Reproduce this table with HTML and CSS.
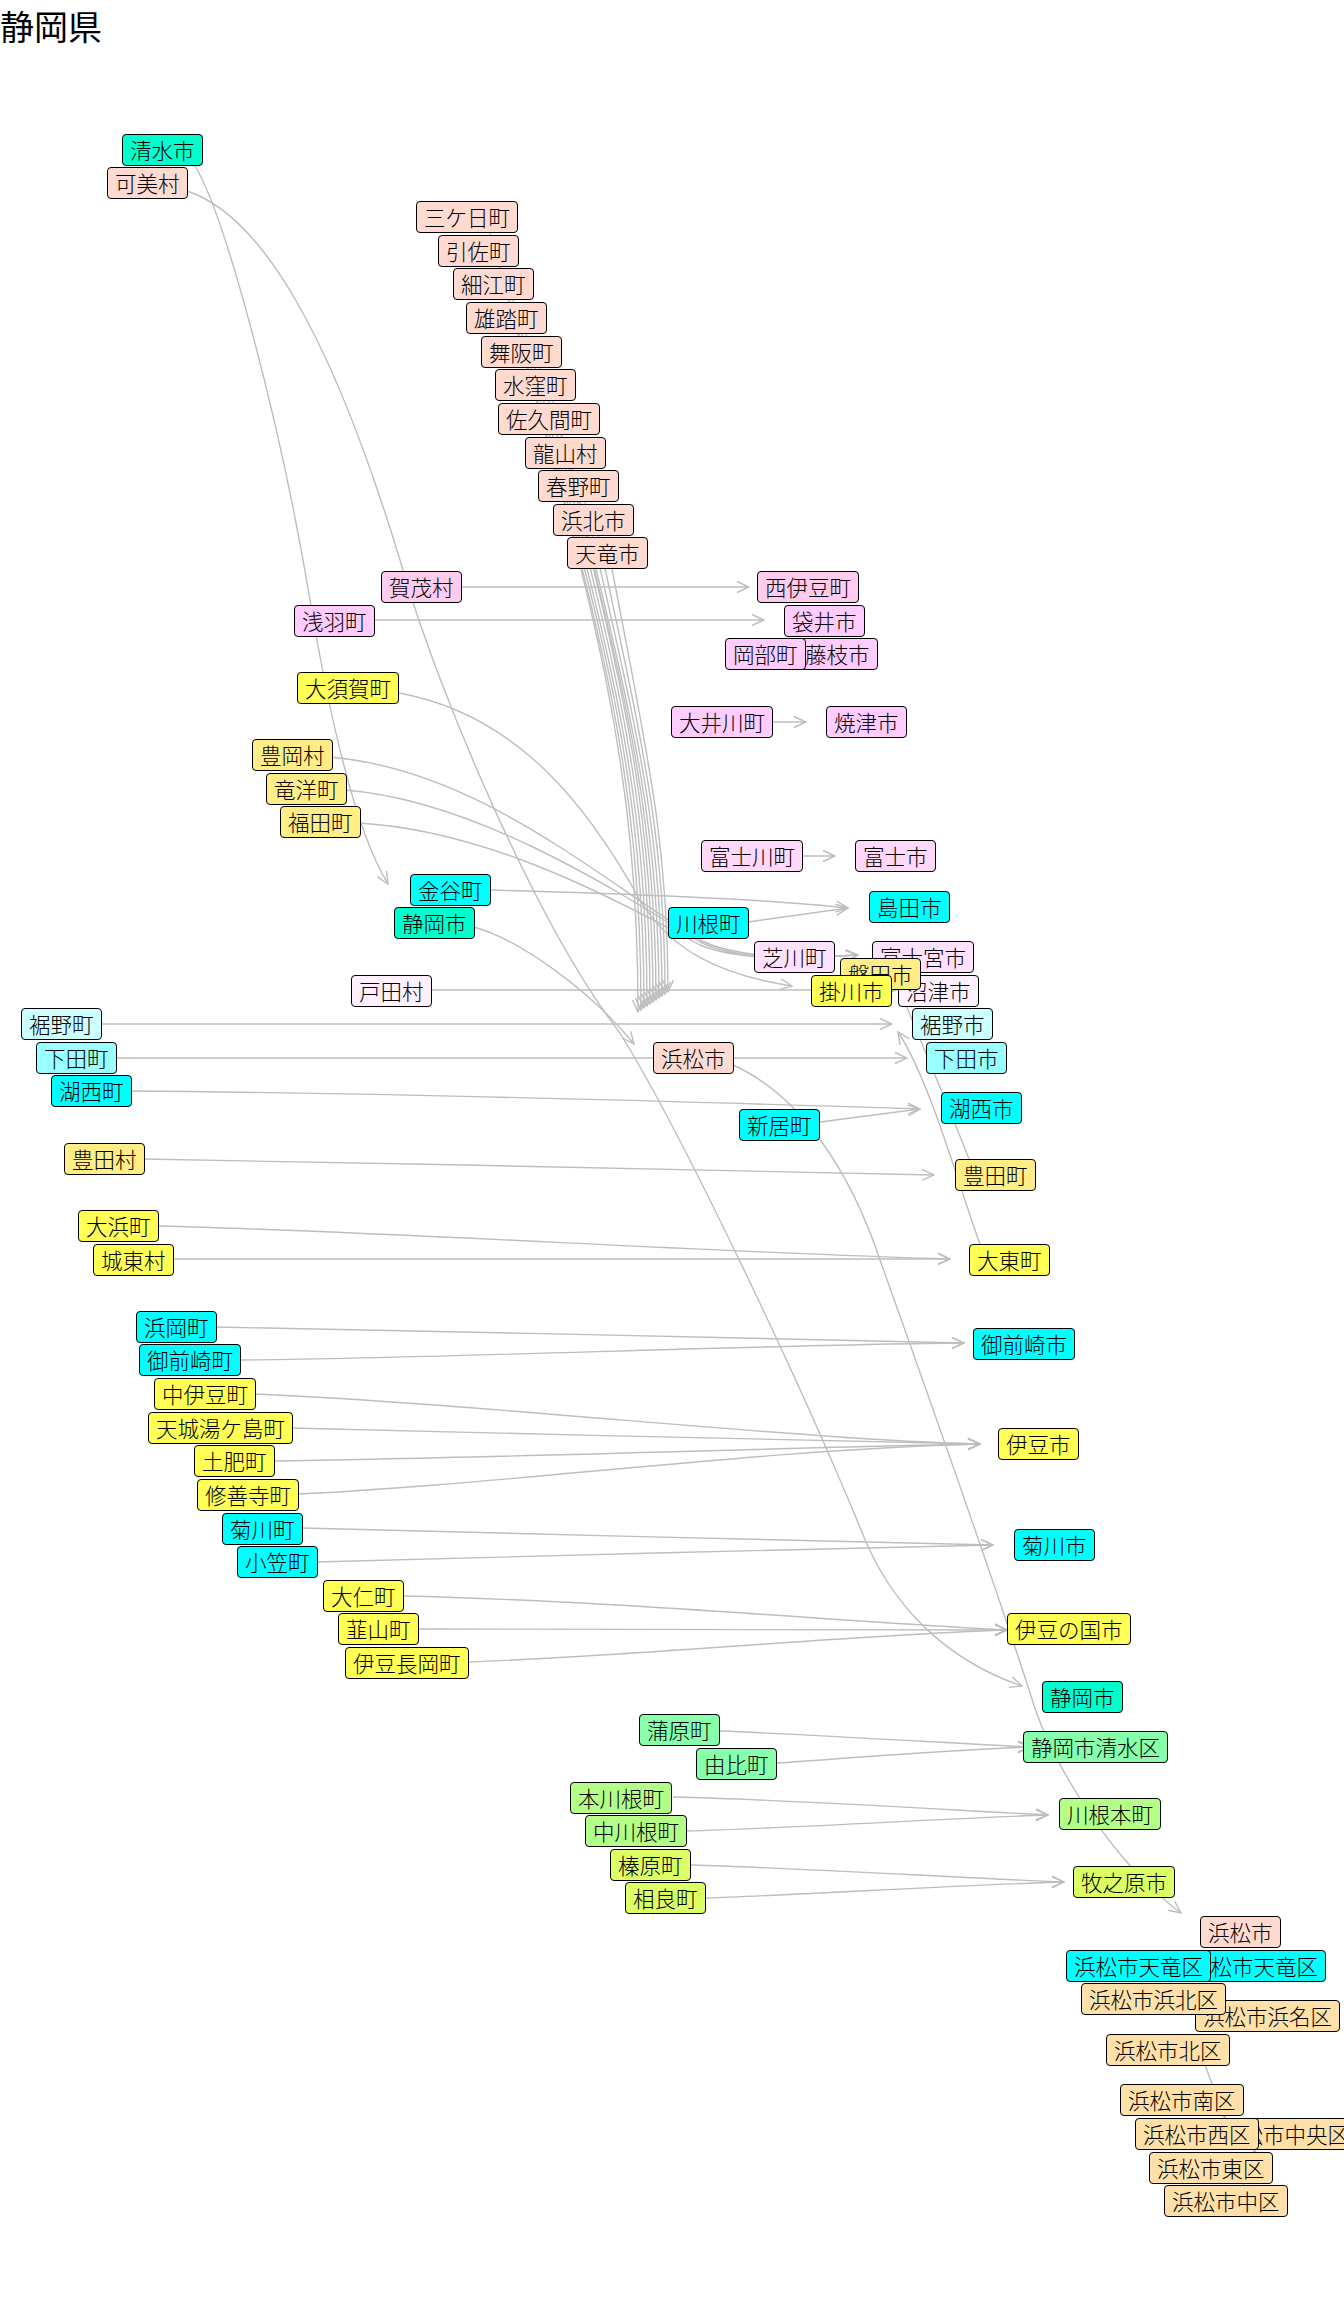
FILE: index.html
```html
<!DOCTYPE html>
<html lang="ja">
<head>
<meta charset="utf-8">
<title>静岡県</title>
<link rel="stylesheet" href="styles.css">
</head>
<body>
<h1 class="title">静岡県</h1>
<div class="graph">
<svg class="edges" viewBox="0 56 1344 2248" xmlns="http://www.w3.org/2000/svg">
<defs>
<marker id="arr" viewBox="0 0 14 14" refX="13" refY="7" markerWidth="14" markerHeight="14" markerUnits="userSpaceOnUse" orient="auto">
<path class="head" d="M1,1.5 L13,7 L1,12.5"/>
</marker>
</defs>
<!-- 浜松市 bundle -->
<path class="a" d="M490,233 C586.2,583.6 638,739.4 638,1012"/>
<path class="a" d="M500,266 C591.7,600.8 641,749.6 641,1010"/>
<path class="a" d="M513,300 C598.2,618.6 644,760.2 644,1008"/>
<path class="a" d="M526,334 C604.7,636.4 647,770.8 647,1006"/>
<path class="a" d="M540,367 C611.5,653.7 650,781.1 650,1004"/>
<path class="a" d="M553,401 C618,671.5 653,791.7 653,1002"/>
<path class="a" d="M562,435 C623.1,689.3 656,802.3 656,1000"/>
<path class="a" d="M572,468 C628.6,706.5 659,812.5 659,998"/>
<path class="a" d="M585,502 C635,724.3 662,823.1 662,996"/>
<path class="a" d="M598,535 C641.6,741.6 665,833.4 665,994"/>
<path class="a" d="M612,569 C648.4,759.4 668,844 668,992"/>
<!-- long curves -->
<path class="a" d="M195,166 C225,215 280,420 310,600 C330,720 355,830 388,884"/>
<path class="a" d="M187,191 C260,215 330,330 400,560 C440,700 540,930 620,1033 C680,1130 800,1380 866,1542 C900,1620 960,1665 1022,1686"/>
<path class="a" d="M474,927 C520,940 590,990 634,1044"/>
<path class="a" d="M733,1065 C800,1095 850,1170 880,1260 C930,1400 1000,1600 1031,1696 C1050,1760 1110,1860 1181,1913"/>
<!-- straight -->
<path class="a" d="M460,587 L749,587"/>
<path class="a" d="M374,620 L764,620"/>
<path class="a" d="M773,722 L806,722"/>
<path class="a" d="M802,856 L835,856"/>
<!-- to 掛川市 / 磐田市 -->
<path class="a" d="M399,693 C520,715 590,810 640,900 C670,950 720,975 792,986"/>
<path class="a" d="M330,757 C480,770 600,880 700,940 C740,960 810,958 858,955"/>
<path class="a" d="M345,790 C470,800 600,880 700,942 C740,962 810,958 858,955"/>
<path class="a" d="M359,823 C480,830 600,890 700,945 C740,962 810,958 858,955"/>
<path class="a" d="M489,890 C600,893 760,898 848,908"/>
<path class="a" d="M748,922 L848,908"/>
<path class="a" d="M431,990 L896,990"/>
<path class="a" d="M101,1024 L892,1024"/>
<path class="a" d="M115,1058 L907,1058"/>
<path class="a" d="M129,1091 C400,1093 700,1102 920,1109"/>
<path class="a" d="M820,1122 L920,1109"/>
<path class="a" d="M144,1159 C400,1162 700,1172 934,1175"/>
<path class="a" d="M159,1226 C400,1232 700,1252 950,1259"/>
<path class="a" d="M172,1259 L950,1259"/>
<path class="a" d="M980,1244 C960,1190 930,1080 898,1032"/>
<path class="a" d="M969,1159 C950,1110 920,1040 900,990"/>
<path class="a" d="M215,1327 C450,1330 750,1340 964,1343"/>
<path class="a" d="M241,1360 C450,1358 750,1345 964,1343"/>
<path class="a" d="M255,1394 C500,1405 800,1440 980,1444"/>
<path class="a" d="M290,1428 C500,1432 800,1442 980,1444"/>
<path class="a" d="M273,1461 C500,1458 800,1447 980,1444"/>
<path class="a" d="M298,1494 C500,1485 750,1450 980,1444"/>
<path class="a" d="M302,1528 C500,1532 800,1542 993,1545"/>
<path class="a" d="M316,1562 C500,1558 800,1548 993,1545"/>
<path class="a" d="M402,1596 C600,1600 850,1622 1007,1630"/>
<path class="a" d="M417,1629 L1007,1630"/>
<path class="a" d="M468,1662 C650,1655 850,1635 1007,1630"/>
<path class="a" d="M720,1731 C800,1734 950,1743 1030,1747"/>
<path class="a" d="M777,1763 C850,1758 950,1750 1030,1747"/>
<path class="a" d="M673,1797 C800,1800 950,1810 1048,1815"/>
<path class="a" d="M686,1831 C800,1828 950,1818 1048,1815"/>
<path class="a" d="M691,1865 C800,1868 960,1878 1064,1882"/>
<path class="a" d="M704,1898 C800,1895 960,1885 1064,1882"/>
<path class="a" d="M1205,2065 L1225,2118"/>
<path class="a" d="M1243,2186 L1255,2150"/>
</svg>

<div class="node c-shz" style="left:122px;top:78px">清水市</div>
<div class="node c-hama" style="left:107px;top:111px">可美村</div>
<div class="node c-hama" style="left:416px;top:145px">三ケ日町</div>
<div class="node c-hama" style="left:438px;top:179px">引佐町</div>
<div class="node c-hama" style="left:453px;top:212px">細江町</div>
<div class="node c-hama" style="left:466px;top:246px">雄踏町</div>
<div class="node c-hama" style="left:481px;top:280px">舞阪町</div>
<div class="node c-hama" style="left:495px;top:313px">水窪町</div>
<div class="node c-hama" style="left:498px;top:347px">佐久間町</div>
<div class="node c-hama" style="left:525px;top:381px">龍山村</div>
<div class="node c-hama" style="left:538px;top:414px">春野町</div>
<div class="node c-hama" style="left:553px;top:448px">浜北市</div>
<div class="node c-hama" style="left:567px;top:481px">天竜市</div>
<div class="node c-pink1" style="left:381px;top:515px">賀茂村</div>
<div class="node c-pink2" style="left:294px;top:549px">浅羽町</div>
<div class="node c-yel" style="left:297px;top:616px">大須賀町</div>
<div class="node c-gold" style="left:252px;top:683px">豊岡村</div>
<div class="node c-gold" style="left:266px;top:717px">竜洋町</div>
<div class="node c-gold" style="left:280px;top:750px">福田町</div>
<div class="node c-cyan" style="left:410px;top:818px">金谷町</div>
<div class="node c-shz" style="left:394px;top:851px">静岡市</div>
<div class="node c-pink5" style="left:351px;top:919px">戸田村</div>
<div class="node c-cyan1" style="left:21px;top:952px">裾野町</div>
<div class="node c-cyan2" style="left:36px;top:986px">下田町</div>
<div class="node c-cyan" style="left:51px;top:1019px">湖西町</div>

<div class="node c-pink1" style="left:757px;top:515px">西伊豆町</div>
<div class="node c-pink2" style="left:784px;top:549px">袋井市</div>
<div class="node c-pink2" style="left:797px;top:582px">藤枝市</div>
<div class="node c-pink2" style="left:725px;top:582px">岡部町</div>
<div class="node c-pink2" style="left:671px;top:650px">大井川町</div>
<div class="node c-pink2" style="left:826px;top:650px">焼津市</div>
<div class="node c-pink3" style="left:701px;top:784px">富士川町</div>
<div class="node c-pink3" style="left:855px;top:784px">富士市</div>
<div class="node c-cyan" style="left:869px;top:835px">島田市</div>
<div class="node c-cyan" style="left:668px;top:851px">川根町</div>
<div class="node c-pink4" style="left:754px;top:885px">芝川町</div>
<div class="node c-pink4" style="left:872px;top:885px">富士宮市</div>
<div class="node c-pink5" style="left:898px;top:919px">沼津市</div>
<div class="node c-gold" style="left:840px;top:902px">磐田市</div>
<div class="node c-yel" style="left:811px;top:919px">掛川市</div>
<div class="node c-cyan1" style="left:912px;top:952px">裾野市</div>
<div class="node c-cyan2" style="left:926px;top:986px">下田市</div>
<div class="node c-hama" style="left:653px;top:986px">浜松市</div>
<div class="node c-cyan" style="left:941px;top:1036px">湖西市</div>
<div class="node c-cyan" style="left:739px;top:1053px">新居町</div>

<div class="node c-gold" style="left:64px;top:1087px">豊田村</div>
<div class="node c-gold" style="left:955px;top:1103px">豊田町</div>
<div class="node c-yel" style="left:78px;top:1154px">大浜町</div>
<div class="node c-yel" style="left:93px;top:1188px">城東村</div>
<div class="node c-yel" style="left:969px;top:1188px">大東町</div>
<div class="node c-cyan" style="left:136px;top:1255px">浜岡町</div>
<div class="node c-cyan" style="left:139px;top:1288px">御前崎町</div>
<div class="node c-cyan" style="left:973px;top:1272px">御前崎市</div>
<div class="node c-yel" style="left:154px;top:1322px">中伊豆町</div>
<div class="node c-yel" style="left:148px;top:1356px">天城湯ケ島町</div>
<div class="node c-yel" style="left:194px;top:1389px">土肥町</div>
<div class="node c-yel" style="left:197px;top:1423px">修善寺町</div>
<div class="node c-yel" style="left:998px;top:1372px">伊豆市</div>
<div class="node c-cyan" style="left:222px;top:1457px">菊川町</div>
<div class="node c-cyan" style="left:237px;top:1490px">小笠町</div>
<div class="node c-cyan" style="left:1014px;top:1473px">菊川市</div>
<div class="node c-yel" style="left:323px;top:1524px">大仁町</div>
<div class="node c-yel" style="left:338px;top:1557px">韮山町</div>
<div class="node c-yel" style="left:345px;top:1591px">伊豆長岡町</div>
<div class="node c-yel" style="left:1007px;top:1557px">伊豆の国市</div>

<div class="node c-shz" style="left:1042px;top:1625px">静岡市</div>
<div class="node c-grn1" style="left:639px;top:1658px">蒲原町</div>
<div class="node c-grn1" style="left:696px;top:1692px">由比町</div>
<div class="node c-grn1" style="left:1023px;top:1675px">静岡市清水区</div>
<div class="node c-grn2" style="left:570px;top:1726px">本川根町</div>
<div class="node c-grn2" style="left:585px;top:1759px">中川根町</div>
<div class="node c-grn2" style="left:1059px;top:1742px">川根本町</div>
<div class="node c-grn3" style="left:610px;top:1793px">榛原町</div>
<div class="node c-grn3" style="left:625px;top:1826px">相良町</div>
<div class="node c-grn3" style="left:1073px;top:1810px">牧之原市</div>

<div class="node c-hama" style="left:1200px;top:1860px">浜松市</div>
<div class="node c-cyan" style="left:1181px;top:1894px">浜松市天竜区</div>
<div class="node c-cyan" style="left:1066px;top:1894px">浜松市天竜区</div>
<div class="node c-ward" style="left:1195px;top:1944px">浜松市浜名区</div>
<div class="node c-ward" style="left:1081px;top:1927px">浜松市浜北区</div>
<div class="node c-ward" style="left:1106px;top:1978px">浜松市北区</div>
<div class="node c-ward" style="left:1120px;top:2028px">浜松市南区</div>
<div class="node c-ward" style="left:1212px;top:2062px">浜松市中央区</div>
<div class="node c-ward" style="left:1135px;top:2062px">浜松市西区</div>
<div class="node c-ward" style="left:1149px;top:2096px">浜松市東区</div>
<div class="node c-ward" style="left:1164px;top:2129px">浜松市中区</div>
</div>
</body>
</html>
```

FILE: styles.css
```css
html, body {
  margin: 0;
  padding: 0;
  background: #ffffff;
}

body {
  width: 1344px;
  height: 2304px;
  overflow: hidden;
  font-family: "Noto Sans CJK JP", "Noto Sans CJK SC", sans-serif;
  color: #000000;
}

.title {
  box-sizing: border-box;
  margin: 0;
  height: 56px;
  padding-top: 4px;
  font-size: 34px;
  line-height: 44px;
  font-weight: 400;
  color: #000000;
}

.graph {
  position: relative;
  width: 1344px;
  height: 2248px;
  overflow: hidden;
}

.edges {
  position: absolute;
  left: 0;
  top: 0;
  width: 1344px;
  height: 2248px;
}

.edges path {
  fill: none;
  stroke: #bebebe;
  stroke-width: 1.4;
}

.edges path.a {
  marker-end: url(#arr);
}

.node {
  position: absolute;
  box-sizing: border-box;
  height: 32px;
  padding: 0 7px;
  border: 1px solid #000000;
  border-radius: 4px;
  font-size: 21.5px;
  font-weight: 300;
  line-height: 30px;
  white-space: nowrap;
  color: #000000;
}

.c-shz { background: #00ffcc; }
.c-hama { background: #ffdad0; }
.c-pink1 { background: #ffccf0; }
.c-pink2 { background: #ffccff; }
.c-pink3 { background: #ffd8fa; }
.c-pink4 { background: #ffe2ff; }
.c-pink5 { background: #fff0ff; }
.c-yel { background: #ffff55; }
.c-gold { background: #ffee88; }
.c-cyan { background: #00ffff; }
.c-cyan1 { background: #ccffff; }
.c-cyan2 { background: #99ffff; }
.c-grn1 { background: #88ffaa; }
.c-grn2 { background: #b3ff88; }
.c-grn3 { background: #ddff66; }
.c-ward { background: #ffe0a8; }
```
